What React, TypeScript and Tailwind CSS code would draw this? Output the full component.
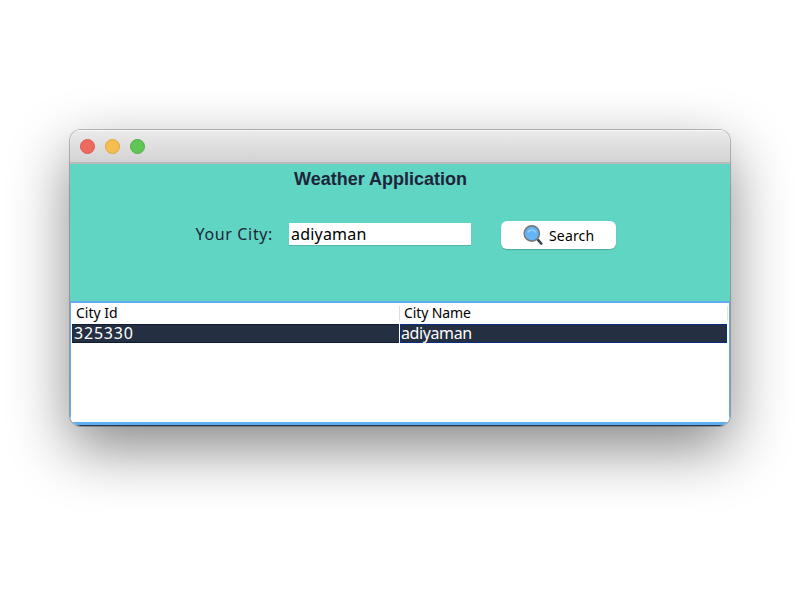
import { useState } from "react";

function SearchIcon() {
  return (
    <svg viewBox="0 0 20 20" className="h-5 w-5 shrink-0" aria-hidden="true">
      <path d="M13 13l1.8 1.8" stroke="#8a8f92" strokeWidth="1.8" />
      <path d="M15 14.9l3.3 3.7" stroke="#37474f" strokeWidth="2.5" strokeLinecap="round" />
      <circle cx="8.8" cy="8.5" r="7.6" fill="#64b5f6" stroke="#77797b" strokeWidth="1.6" />
      <path d="M5.2 6.8c1.8-2.3 5.4-2.3 7.2 0" fill="none" stroke="#a5d6fb" strokeWidth="1.3" strokeLinecap="round" />
    </svg>
  );
}

function TitleBar() {
  return (
    <header className="flex h-[34px] shrink-0 items-center gap-[10px] border-b-2 border-[#b9b9b9] bg-linear-to-b from-[#ebebeb] to-[#d3d3d3] pl-[9.5px] shadow-[inset_0_1px_0_#f8f8f8]">
      <span className="h-[15px] w-[15px] rounded-full border border-[#d75a50] bg-[#ef6a5e]" />
      <span className="h-[15px] w-[15px] rounded-full border border-[#dba73f] bg-[#f5be4e]" />
      <span className="h-[15px] w-[15px] rounded-full border border-[#52ad46] bg-[#5fc554]" />
    </header>
  );
}

export default function App() {
  const [city, setCity] = useState("adiyaman");

  return (
    <main className="h-[600px] w-[800px] overflow-hidden bg-white pt-[130px] pl-[70px] font-['Noto_Sans',sans-serif]">
      <div className="h-[296px] w-[660px] rounded-[11px] shadow-[0_0_0_1px_rgba(0,0,0,0.24),0_22px_60px_rgba(0,0,0,0.48)]">
        <div className="flex h-full flex-col overflow-hidden rounded-[11px]">
          <TitleBar />
          <section className="h-[137px] shrink-0 bg-[#61d5c4] text-[#1e2439]">
            <h1 className="ml-[224px] pt-[3px] font-['Liberation_Sans',sans-serif] text-[18px] leading-[24px] font-bold whitespace-nowrap">
              Weather Application
            </h1>
            <div className="mt-[29px] flex h-7 items-center">
              <label htmlFor="city" className="ml-[125.5px] w-[93.5px] text-[16px] tracking-[0.65px] whitespace-nowrap">
                Your City:
              </label>
              <input
                id="city"
                value={city}
                onChange={(e) => setCity(e.target.value)}
                className="h-[22px] w-[182px] bg-white px-[2px] text-[16px] leading-[22px] tracking-[0.2px] text-black shadow-[0_1px_0_#54b5a8] outline-none"
              />
              <button className="mt-[2px] ml-[30px] flex h-7 w-[115px] items-center rounded-[6px] bg-white pl-[22px] text-[14px] tracking-[0.15px] text-black shadow-[0_1px_1px_rgba(0,0,0,0.2)]">
                <SearchIcon />
                <span className="ml-[6px]">Search</span>
              </button>
            </div>
          </section>
          <section className="flex-1 border border-t-2 border-b-[3px] border-[#61aeed] bg-white">
            <div className="flex h-[21px] pt-[3px] text-[14px] leading-[14px] text-black">
              <div className="h-[15px] w-[329px] border-r border-[#dedede] pl-[5px]">City Id</div>
              <div className="h-[15px] w-[328px] border-r border-[#e7e7e7] pl-1 tracking-[-0.1px]">City Name</div>
            </div>
            <div className="flex h-[19px] gap-px pl-px text-[16px] leading-[17px] text-white">
              <div className="w-[327px] border-y border-[#111c30] bg-[#242f42] pl-[2px] tracking-[0.8px]">325330</div>
              <div className="w-[327px] border border-[#0b2a82] bg-[#242f42] tracking-[-0.4px]">adiyaman</div>
            </div>
          </section>
          <div className="h-px shrink-0 bg-[#26384f]" />
        </div>
      </div>
    </main>
  );
}
